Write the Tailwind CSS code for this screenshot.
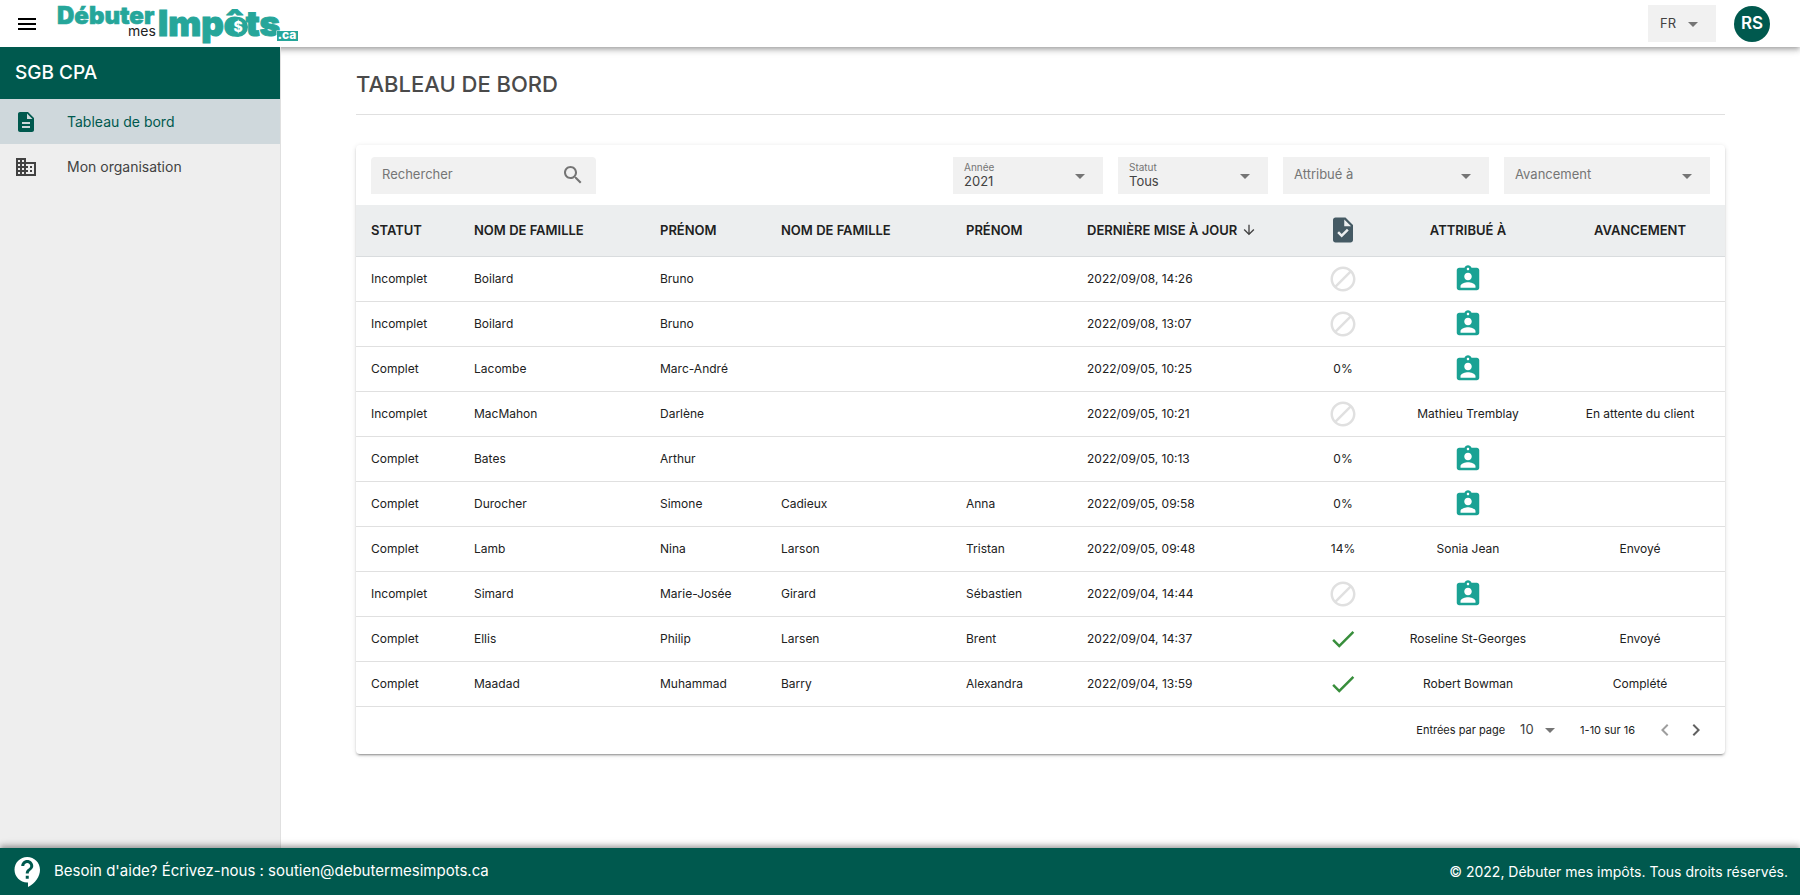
<!DOCTYPE html>
<html lang="fr">
<head>
    <meta charset="UTF-8">
    <meta name="viewport" content="width=device-width, initial-scale=1.0">
    <title>Tableau de bord - Débuter mes impôts</title>
    <script src="https://cdn.jsdelivr.net/npm/@tailwindcss/browser@4"></script>
</head>
<body class="bg-white text-[#212121] font-['Inter',sans-serif]">
    <!-- Icons -->
    <svg class="hidden">
        <symbol id="i-block" viewBox="0 0 24 24"><path d="M12 2C6.5 2 2 6.5 2 12s4.5 10 10 10 10-4.5 10-10S17.5 2 12 2zM4 12c0-4.4 3.6-8 8-8 1.8 0 3.5.6 4.9 1.7L5.7 16.9C4.6 15.5 4 13.8 4 12zm8 8c-1.8 0-3.5-.6-4.9-1.7L18.3 7.1C19.4 8.5 20 10.2 20 12c0 4.4-3.6 8-8 8z"/></symbol>
        <symbol id="i-assign" viewBox="0 0 24 24"><path d="M19 3h-4.18C14.4 1.84 13.3 1 12 1c-1.3 0-2.4.84-2.82 2H5c-1.1 0-2 .9-2 2v14c0 1.1.9 2 2 2h14c1.1 0 2-.9 2-2V5c0-1.1-.9-2-2-2zm-7 0c.55 0 1 .45 1 1s-.45 1-1 1-1-.45-1-1 .45-1 1-1zm0 4c1.66 0 3 1.34 3 3s-1.34 3-3 3-3-1.34-3-3 1.34-3 3-3zm6 12H6v-1.4c0-2 4-3.1 6-3.1s6 1.1 6 3.1V19z"/></symbol>
        <symbol id="i-done" viewBox="0 0 24 24"><path d="M9 16.2L4.8 12l-1.4 1.4L9 19 21 7l-1.4-1.4L9 16.2z"/></symbol>
        <symbol id="i-caret" viewBox="0 0 24 24"><path d="M7 10l5 5 5-5z"/></symbol>
    </svg>

    <div class="flex min-h-screen flex-col">
        <!-- Header -->
        <header class="flex h-[47px] shrink-0 items-center justify-between bg-white pl-[15px] pr-[30px] shadow-[0_2px_4px_-1px_rgba(0,0,0,0.2),0_4px_5px_rgba(0,0,0,0.14),0_1px_10px_rgba(0,0,0,0.12)]">
            <div class="flex items-center gap-4">
                <button type="button" aria-label="Menu" class="block">
                    <svg class="size-6" viewBox="0 0 24 24"><path d="M3 18h18v-2H3v2zm0-5h18v-2H3v2zm0-7v2h18V6H3z"/></svg>
                </button>
                <a href="#" aria-label="Débuter mes impôts">
                    <svg class="h-[47px] w-[250px]" viewBox="0 0 250 47" font-family="Inter, sans-serif">
                        <g fill="#26a69a" stroke="#26a69a" font-weight="900">
                            <text x="2" y="24" font-size="24" stroke-width="0.6">Débuter</text>
                            <text x="103" y="36" font-size="35" stroke-width="1">Impôts</text>
                        </g>
                        <text x="73" y="36" font-size="14" fill="#212121">mes</text>
                        <circle cx="183" cy="27" r="10" fill="#26a69a"/>
                        <text x="183" y="32" font-size="14" font-weight="800" fill="#fff" text-anchor="middle">$</text>
                        <rect x="222" y="31" width="21" height="10" fill="#26a69a" stroke="#fff" stroke-width="1" paint-order="stroke"/>
                        <text x="232" y="39" font-size="12" font-weight="800" fill="#fff" text-anchor="middle">.ca</text>
                    </svg>
                </a>
            </div>
            <div class="flex items-center gap-[18px]">
                <div class="relative h-[37px] w-[68px] bg-[#f1f1f1]">
                    <select aria-label="Langue" class="h-full w-full appearance-none pl-3 text-[13px] text-[#424242]">
                        <option>FR</option>
                        <option>EN</option>
                    </select>
                    <svg class="pointer-events-none absolute right-[11px] top-[7px] size-6 fill-[#757575]"><use href="#i-caret"/></svg>
                </div>
                <button type="button" class="size-9 rounded-full bg-[#00594e] text-[17px] font-semibold text-white">RS</button>
            </div>
        </header>

        <div class="flex flex-1">
            <!-- Sidebar -->
            <aside class="relative w-[281px] shrink-0 border-r border-[#e0e0e0] bg-[#eeeeee]">
                <h2 class="flex h-[52px] items-center bg-[#00594e] pl-[15px] text-[19px] font-medium text-white">SGB CPA</h2>
                <nav class="text-sm">
                    <a href="#" class="flex h-[45px] items-center gap-[29px] bg-[#cfd8dc] pl-[14px] text-[#00594e]">
                        <svg class="size-6 fill-[#00594e]" viewBox="0 0 24 24"><path d="M14 2H6c-1.1 0-1.99.9-1.99 2L4 20c0 1.1.89 2 1.99 2H18c1.1 0 2-.9 2-2V8l-6-6zm2 16H8v-2h8v2zm0-4H8v-2h8v2zm-3-5V3.5L18.5 9H13z"/></svg>
                        Tableau de bord
                    </a>
                    <a href="#" class="flex h-[45px] items-center gap-[29px] pl-[14px] text-[#424242]">
                        <svg class="size-6 fill-[#424242]" viewBox="0 0 24 24"><path d="M12 7V3H2v18h20V7H12zM6 19H4v-2h2v2zm0-4H4v-2h2v2zm0-4H4V9h2v2zm0-4H4V5h2v2zm4 12H8v-2h2v2zm0-4H8v-2h2v2zm0-4H8V9h2v2zm0-4H8V5h2v2zm10 12h-8v-2h2v-2h-2v-2h2v-2h-2V9h8v10zm-2-8h-2v2h2v-2zm0 4h-2v2h2v-2z"/></svg>
                        Mon organisation
                    </a>
                </nav>
            </aside>

            <!-- Main -->
            <main class="min-w-0 flex-1 px-[75px] pb-8">
                <h1 class="flex h-[68px] items-center border-b border-[#e0e0e0] pt-2 text-[22px] font-medium text-[#4a4a4a]">TABLEAU DE BORD</h1>

                <section class="mt-[30px] overflow-hidden rounded bg-white shadow-[0_3px_1px_-2px_rgba(0,0,0,0.2),0_2px_2px_rgba(0,0,0,0.14),0_1px_5px_rgba(0,0,0,0.12)]">
                    <!-- Filters -->
                    <div class="flex h-[60px] items-center gap-[15px] px-[15px]">
                        <div class="mr-auto flex h-[37px] w-[225px] items-center rounded-t bg-[#f1f1f1] px-[11px]">
                            <input type="text" aria-label="Rechercher" placeholder="Rechercher" class="min-w-0 flex-1 text-[13px] outline-none placeholder:text-[#757575]">
                            <svg class="size-6 fill-[#757575]" viewBox="0 0 24 24"><path d="M15.5 14h-.79l-.28-.27C15.41 12.59 16 11.11 16 9.5 16 5.91 13.09 3 9.5 3S3 5.91 3 9.5 5.91 16 9.5 16c1.61 0 3.09-.59 4.23-1.57l.27.28v.79l5 4.99L20.49 19l-4.99-5zm-6 0C7.01 14 5 11.99 5 9.5S7.01 5 9.5 5 14 7.01 14 9.5 11.99 14 9.5 14z"/></svg>
                        </div>
                        <div class="relative h-[37px] w-[150px] bg-[#f1f1f1] pt-1">
                            <label for="annee" class="block pl-[11px] text-[10px] leading-3 text-[#757575]">Année</label>
                            <select id="annee" class="block w-full appearance-none pl-[11px] text-[13px] leading-4 text-[#424242]">
                                <option>2021</option>
                                <option>2020</option>
                            </select>
                            <svg class="pointer-events-none absolute right-[11px] top-[7px] size-6 fill-[#757575]"><use href="#i-caret"/></svg>
                        </div>
                        <div class="relative h-[37px] w-[150px] bg-[#f1f1f1] pt-1">
                            <label for="statut" class="block pl-[11px] text-[10px] leading-3 text-[#757575]">Statut</label>
                            <select id="statut" class="block w-full appearance-none pl-[11px] text-[13px] leading-4 text-[#424242]">
                                <option>Tous</option>
                                <option>Complet</option>
                                <option>Incomplet</option>
                            </select>
                            <svg class="pointer-events-none absolute right-[11px] top-[7px] size-6 fill-[#757575]"><use href="#i-caret"/></svg>
                        </div>
                        <div class="relative h-[37px] w-[206px] bg-[#f1f1f1]">
                            <select aria-label="Attribué à" class="h-full w-full appearance-none pl-[11px] text-[13px] text-[#757575]">
                                <option>Attribué à</option>
                            </select>
                            <svg class="pointer-events-none absolute right-[11px] top-[7px] size-6 fill-[#757575]"><use href="#i-caret"/></svg>
                        </div>
                        <div class="relative h-[37px] w-[206px] bg-[#f1f1f1]">
                            <select aria-label="Avancement" class="h-full w-full appearance-none pl-[11px] text-[13px] text-[#757575]">
                                <option>Avancement</option>
                            </select>
                            <svg class="pointer-events-none absolute right-[11px] top-[7px] size-6 fill-[#757575]"><use href="#i-caret"/></svg>
                        </div>
                    </div>

                    <table class="w-full table-fixed text-left text-xs">
                        <colgroup>
                            <col class="w-[103px]">
                            <col class="w-[186px]">
                            <col class="w-[121px]">
                            <col class="w-[185px]">
                            <col class="w-[121px]">
                            <col class="w-[233px]">
                            <col class="w-[76px]">
                            <col class="w-[174px]">
                            <col class="w-[170px]">
                        </colgroup>
                        <thead class="bg-[#eceeef] text-[13px]">
                            <tr class="h-[51px] whitespace-nowrap border-b border-[#d9dcde]">
                                <th class="pl-[15px] font-semibold">STATUT</th>
                                <th class="pl-[15px] font-semibold">NOM DE FAMILLE</th>
                                <th class="pl-[15px] font-semibold">PRÉNOM</th>
                                <th class="pl-[15px] font-semibold">NOM DE FAMILLE</th>
                                <th class="pl-[15px] font-semibold">PRÉNOM</th>
                                <th class="pl-[15px] font-semibold">
                                    <button type="button" class="flex items-center gap-1">
                                        DERNIÈRE MISE À JOUR
                                        <svg class="size-4 fill-[#424242]" viewBox="0 0 24 24"><path d="M20 12l-1.41-1.41L13 16.17V4h-2v12.17l-5.58-5.59L4 12l8 8 8-8z"/></svg>
                                    </button>
                                </th>
                                <th>
                                    <svg class="mx-auto size-[30px] fill-[#455a64]" viewBox="0 0 24 24"><path d="M14 2H6c-1.1 0-1.99.9-1.99 2L4 20c0 1.1.89 2 1.99 2H18c1.1 0 2-.9 2-2V8l-6-6zm-3.06 16L7.4 14.46l1.41-1.41 2.12 2.12 4.24-4.24 1.41 1.41L10.94 18zM13 9V3.5L18.5 9H13z"/></svg>
                                </th>
                                <th class="text-center font-semibold">ATTRIBUÉ À</th>
                                <th class="text-center font-semibold">AVANCEMENT</th>
                            </tr>
                        </thead>
                        <tbody id="rows"></tbody>
                    </table>

                    <!-- Pagination -->
                    <div class="flex h-[47px] items-center justify-end pr-[17px] text-[11px]">
                        <label for="parPage">Entrées par page</label>
                        <div class="relative ml-[15px] w-[38px]">
                            <select id="parPage" class="block w-full appearance-none text-[13px] text-[#424242]">
                                <option>10</option>
                                <option>25</option>
                            </select>
                            <svg class="pointer-events-none absolute -right-1 -top-[2px] size-6 fill-[#757575]"><use href="#i-caret"/></svg>
                        </div>
                        <span class="ml-[22px]">1-10 sur 16</span>
                        <button type="button" aria-label="Page précédente" class="ml-[18px]">
                            <svg class="size-6 fill-[#9e9e9e]" viewBox="0 0 24 24"><path d="M15.41 7.41L14 6l-6 6 6 6 1.41-1.41L10.83 12z"/></svg>
                        </button>
                        <button type="button" aria-label="Page suivante" class="ml-[7px]">
                            <svg class="size-6 fill-[#616161]" viewBox="0 0 24 24"><path d="M10 6L8.59 7.41 13.17 12l-4.58 4.59L10 18l6-6z"/></svg>
                        </button>
                    </div>
                </section>
            </main>
        </div>

        <!-- Footer -->
        <footer class="relative flex h-[47px] shrink-0 items-center justify-between bg-[#00594e] pl-[10px] pr-3 text-white shadow-[0_-2px_4px_-1px_rgba(0,0,0,0.2),0_-4px_5px_rgba(0,0,0,0.14),0_-1px_10px_rgba(0,0,0,0.12)]">
            <div class="flex items-center gap-2">
                <svg class="size-9 fill-white" viewBox="0 0 24 24"><path d="M11.5 2C6.81 2 3 5.81 3 10.5S6.81 19 11.5 19h.5v3c4.86-2.34 8-7 8-11.5C20 5.81 16.19 2 11.5 2zm1 14.5h-2v-2h2v2zm0-3.5h-2c0-3.25 3-3 3-5 0-1.1-.9-2-2-2s-2 .9-2 2h-2c0-2.21 1.79-4 4-4s4 1.79 4 4c0 2.5-3 2.75-3 5z"/></svg>
                <p class="text-[15px]">Besoin d'aide? Écrivez-nous : <a href="mailto:soutien@debutermesimpots.ca">soutien@debutermesimpots.ca</a></p>
            </div>
            <p class="text-sm">© 2022, Débuter mes impôts. Tous droits réservés.</p>
        </footer>
    </div>

    <script>
        // statut, nom, prénom, nom (conjoint), prénom (conjoint), mise à jour, documents, attribué à, avancement
        const dossiers = [
            ['Incomplet', 'Boilard', 'Bruno', '', '', '2022/09/08, 14:26', 'block', '', ''],
            ['Incomplet', 'Boilard', 'Bruno', '', '', '2022/09/08, 13:07', 'block', '', ''],
            ['Complet', 'Lacombe', 'Marc-André', '', '', '2022/09/05, 10:25', '0%', '', ''],
            ['Incomplet', 'MacMahon', 'Darlène', '', '', '2022/09/05, 10:21', 'block', 'Mathieu Tremblay', 'En attente du client'],
            ['Complet', 'Bates', 'Arthur', '', '', '2022/09/05, 10:13', '0%', '', ''],
            ['Complet', 'Durocher', 'Simone', 'Cadieux', 'Anna', '2022/09/05, 09:58', '0%', '', ''],
            ['Complet', 'Lamb', 'Nina', 'Larson', 'Tristan', '2022/09/05, 09:48', '14%', 'Sonia Jean', 'Envoyé'],
            ['Incomplet', 'Simard', 'Marie-Josée', 'Girard', 'Sébastien', '2022/09/04, 14:44', 'block', '', ''],
            ['Complet', 'Ellis', 'Philip', 'Larsen', 'Brent', '2022/09/04, 14:37', 'done', 'Roseline St-Georges', 'Envoyé'],
            ['Complet', 'Maadad', 'Muhammad', 'Barry', 'Alexandra', '2022/09/04, 13:59', 'done', 'Robert Bowman', 'Complété'],
        ];

        const icons = {
            block: '<svg class="mx-auto size-[30px] fill-[#e0e0e0]"><use href="#i-block"/></svg>',
            done: '<svg class="mx-auto size-[30px] fill-[#388e3c]"><use href="#i-done"/></svg>',
        };
        const assign = '<button type="button" aria-label="Attribuer" class="block mx-auto"><svg class="size-[30px] fill-[#1aa294]"><use href="#i-assign"/></svg></button>';

        document.getElementById('rows').innerHTML = dossiers.map(d => `
            <tr class="h-[45px] whitespace-nowrap border-b border-[#e0e0e0]">
                ${d.slice(0, 6).map(v => `<td class="pl-[15px]">${v}</td>`).join('')}
                <td class="text-center">${icons[d[6]] || d[6]}</td>
                <td class="text-center">${d[7] || assign}</td>
                <td class="text-center">${d[8]}</td>
            </tr>`).join('');
    </script>
</body>
</html>
